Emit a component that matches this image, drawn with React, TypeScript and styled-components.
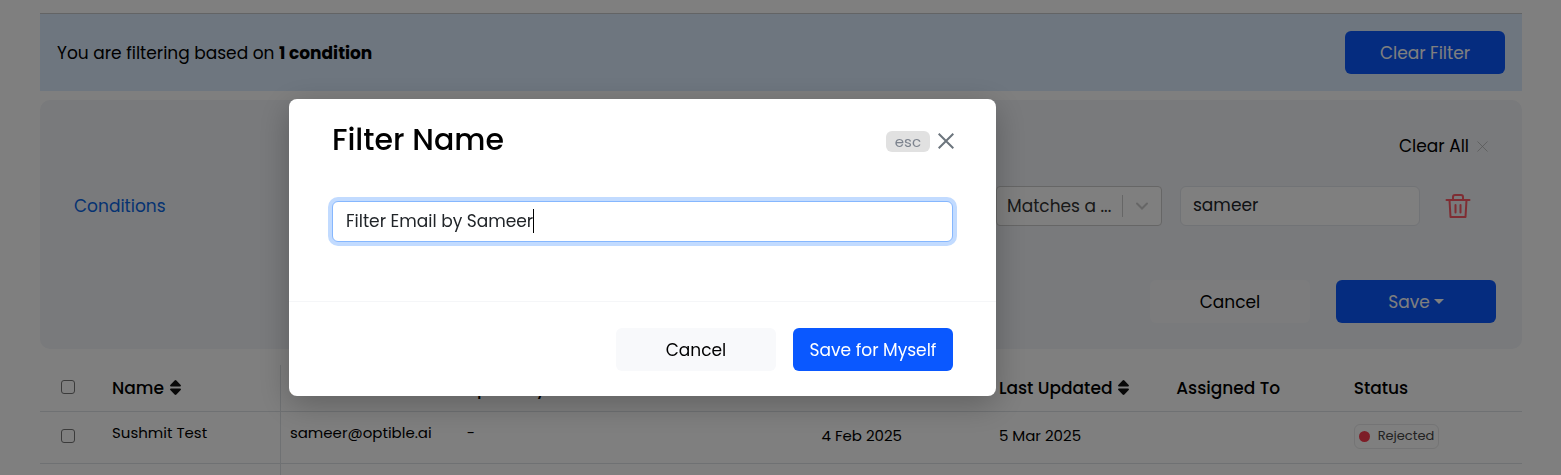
import React, { useLayoutEffect, useRef, useState } from "react";
import styled, { createGlobalStyle, css } from "styled-components";

const GlobalStyle = createGlobalStyle`
  *, *::before, *::after { box-sizing: border-box; }
  html, body { margin: 0; background: #fff; }
  body, button, input, select { font-family: Poppins, Inter, "Open Sans", sans-serif; }
  body { font-size: 17px; line-height: 24px; color: #000; }
`;

/* The page behind an open dialog does not scroll. */
const Page = styled.main`
  height: 100vh;
  overflow: hidden;
  padding: 13px 39px 0 40px;
`;

const Banner = styled.section`
  display: flex;
  align-items: center;
  justify-content: space-between;
  padding: 17px;
  border-top: 1px solid #c6c8ca;
  background: #dcecff;
`;

const Button = styled.button<{ $kind: "primary" | "light" }>`
  display: inline-flex;
  align-items: center;
  justify-content: center;
  gap: 4px;
  width: 160px;
  height: 43px;
  padding: 0;
  border: 0;
  border-radius: 6px;
  font-size: 17px;
  line-height: 24px;
  white-space: nowrap;
  ${({ $kind }) =>
    $kind === "primary"
      ? css`background: #0a58ff; color: #fff;`
      : css`background: #f8f9fb; color: #000;`}
`;

const Arrow = styled.span`
  border: 5px solid transparent;
  border-top-color: currentColor;
  border-bottom: 0;
`;

const Panel = styled.section`
  margin-top: 9px;
  padding: 34px 26px 26px 34px;
  border-radius: 10px;
  background: #f2f4f8;
`;

const PanelTop = styled.div`
  display: flex;
  justify-content: flex-end;
  padding-right: 8px;
`;

const ClearAll = styled.button`
  display: flex;
  align-items: center;
  gap: 8px;
  padding: 0;
  border: 0;
  background: none;
  font-size: 17px;
  line-height: 24px;
`;

const ConditionRow = styled.div`
  display: flex;
  align-items: center;
  margin-top: 28px;
  padding-right: 25px;
`;

const ConditionsLabel = styled.span`
  flex: 1;
  color: #0b66e4;
`;

const SelectBox = styled.label`
  display: flex;
  align-items: center;
  width: 166px;
  height: 40px;
  margin-right: 18px;
  padding-right: 12px;
  border: 1px solid #ccc;
  border-radius: 4px;
  background: #fff;
`;

const Select = styled.select`
  flex: 1;
  min-width: 0;
  height: 36px;
  padding: 0 0 0 10px;
  border: 0;
  appearance: none;
  background: none;
  font-size: 17px;
  color: #333;
`;

const Divider = styled.span`
  width: 1px;
  height: 22px;
  margin-right: 12px;
  background: #ccc;
`;

const ValueInput = styled.input`
  width: 240px;
  height: 40px;
  margin-right: 25px;
  padding: 0 12px 2px;
  border: 1px solid #e3e6ec;
  border-radius: 6px;
  background: #fff;
  font-size: 17px;
  color: #212529;
`;

const IconButton = styled.button`
  display: flex;
  padding: 0;
  border: 0;
  background: none;
`;

const PanelActions = styled.div`
  display: flex;
  justify-content: flex-end;
  gap: 26px;
  margin-top: 54px;
`;

const Table = styled.table`
  width: 100%;
  margin-top: 16px;
  table-layout: fixed;
  border-collapse: collapse;
`;

const Row = styled.tr`
  border-bottom: 1px solid #dee2e6;
`;

const CheckHead = styled.th`
  width: 63px;
  height: 46px;
  padding: 0 0 2px 21px;
  text-align: left;
`;

const Head = styled.th<{ $divided?: boolean }>`
  padding: 0 9px;
  border-right: ${({ $divided }) => ($divided ? "1px solid #dee2e6" : "0")};
  text-align: left;
  font-weight: 500;
  white-space: nowrap;
`;

const SortLabel = styled.span`
  display: inline-flex;
  align-items: center;
  gap: 6px;
`;

const Cell = styled.td<{ $divided?: boolean; $raised?: boolean }>`
  height: 52px;
  padding: ${({ $raised }) => ($raised ? "0 9px 8px" : "0 9px 2px")};
  border-right: ${({ $divided }) => ($divided ? "1px solid #dee2e6" : "0")};
  font-size: 15px;
  line-height: 20px;
  white-space: nowrap;
`;

const CheckCell = styled(Cell)`
  padding: 0 0 2px 21px;
`;

const Checkbox = styled.input`
  display: block;
  width: 14px;
  height: 14px;
  margin: 0;
  appearance: none;
  border: 1px solid #767676;
  border-radius: 3px;
  background: #fff;
`;

const Badge = styled.span`
  display: inline-flex;
  align-items: center;
  gap: 8px;
  height: 25px;
  padding: 0 4px;
  border: 1px solid #e8e8ea;
  border-radius: 6px;
  font-size: 13px;
  color: #444;
  vertical-align: middle;
`;

const Dot = styled.span`
  width: 11px;
  height: 11px;
  border-radius: 50%;
  background: #fb3b4e;
`;

const Backdrop = styled.div`
  position: fixed;
  inset: 0;
  padding: 99px 24px 0 289px;
  background: rgba(0, 0, 0, 0.5);
`;

const Dialog = styled.form`
  max-width: 707px;
  border-radius: 8px;
  background: #fff;
  box-shadow: 0 8px 32px rgba(0, 0, 0, 0.25);
`;

const DialogHeader = styled.header`
  display: flex;
  align-items: center;
  justify-content: space-between;
  padding: 21px 42px 0 43px;
`;

const Title = styled.h2`
  margin: 0;
  font-size: 30px;
  line-height: 40px;
  font-weight: 500;
`;

const CloseButton = styled.button`
  display: flex;
  align-items: center;
  gap: 8px;
  padding: 2px 0 0;
  border: 0;
  background: none;
  color: #6c757d;
`;

const Key = styled.kbd`
  padding: 0 9px;
  border-radius: 6px;
  background: #e1e1e1;
  font-family: inherit;
  font-size: 15px;
  line-height: 21px;
  color: #7c838e;
`;

const DialogBody = styled.div`
  padding: 41px 43px 59px;
`;

const NameField = styled.div`
  position: relative;
`;

const NameInput = styled.input`
  display: block;
  width: 100%;
  height: 41px;
  padding: 0 13px 2px;
  border: 1px solid #86b7fe;
  border-radius: 6px;
  outline: 0;
  box-shadow: 0 0 0 4px #c2dbff;
  font-size: 17px;
  color: #212529;
  caret-color: transparent;
`;

const TextCaret = styled.span`
  position: absolute;
  top: 8px;
  width: 1px;
  height: 24px;
  background: #000;
  pointer-events: none;
`;

const DialogFooter = styled.footer`
  display: flex;
  justify-content: flex-end;
  gap: 17px;
  padding: 26px 43px 25px;
  border-top: 1px solid #f5f6f8;
`;

const Cross = ({ size, color, width }: { size: number; color: string; width: number }) => (
  <svg width={size} height={size} viewBox="0 0 16 16" fill="none" stroke={color} strokeWidth={width} aria-hidden="true">
    <path d="M.7.7l14.6 14.6M15.3.7L.7 15.3" />
  </svg>
);

const SortIcon = () => (
  <svg width="11" height="15" viewBox="0 0 11 15" aria-hidden="true">
    <path d="M4.600.4q.9-.8 1.800 0L10.700 4.900Q11.400 6.500 10 6.600H1Q-.4 6.500.3 4.900zM4.600 14.600q.9.8 1.800 0l4.300-4.500Q11.400 8.500 10 8.400H1Q-.4 8.500.3 10.100z" fill="#111" />
  </svg>
);

const Trash = () => (
  <svg width="26" height="26" viewBox="0 0 26 26" fill="none" stroke="#ff5a66" strokeWidth="2" strokeLinecap="round" strokeLinejoin="round" aria-hidden="true">
    <path d="M1.500 7h23M4.500 7l1 17h15l1-17M8 6.500V4q0-2 2-2h6q2 0 2 2v2.500M10.500 12v7.500M15.500 12v7.500" />
  </svg>
);

const Chevron = () => (
  <svg width="14" height="8" viewBox="0 0 14 8" fill="none" stroke="#ccc" strokeWidth="2" strokeLinecap="round" aria-hidden="true">
    <path d="M2 1.500l5 5 5-5" />
  </svg>
);

/* Text box with a solid, always visible caret that follows the typed text. */
function FilterNameField({ labelId }: { labelId: string }) {
  const ref = useRef<HTMLInputElement>(null);
  const [value, setValue] = useState("Filter Email by Sameer");
  const [caretLeft, setCaretLeft] = useState(0);

  useLayoutEffect(() => {
    const el = ref.current;
    const ctx = document.createElement("canvas").getContext("2d");
    if (!el || !ctx) return;
    el.focus();
    const style = getComputedStyle(el);
    ctx.font = `${style.fontSize} ${style.fontFamily}`;
    setCaretLeft(Math.round(ctx.measureText(value).width) + 14);
  }, [value]);

  return (
    <NameField>
      <NameInput ref={ref} aria-labelledby={labelId} value={value} onChange={(e) => setValue(e.target.value)} />
      <TextCaret style={{ left: caretLeft }} />
    </NameField>
  );
}

export default function App() {
  return (
    <>
      <GlobalStyle />
      <Page>
        <Banner>
          <span>You are filtering based on <b>1 condition</b></span>
          <Button type="button" $kind="primary">Clear Filter</Button>
        </Banner>
        <Panel>
          <PanelTop>
            <ClearAll type="button">Clear All <Cross size={11} color="#aaa" width={1} /></ClearAll>
          </PanelTop>
          <ConditionRow>
            <ConditionsLabel>Conditions</ConditionsLabel>
            <SelectBox>
              <Select aria-label="Match type"><option>Matches a ...</option></Select>
              <Divider />
              <Chevron />
            </SelectBox>
            <ValueInput aria-label="Value" defaultValue="sameer" />
            <IconButton type="button" aria-label="Delete condition"><Trash /></IconButton>
          </ConditionRow>
          <PanelActions>
            <Button type="button" $kind="light">Cancel</Button>
            <Button type="button" $kind="primary">Save<Arrow /></Button>
          </PanelActions>
        </Panel>
        <Table>
          <thead>
            <Row>
              <CheckHead><Checkbox type="checkbox" aria-label="Select all" /></CheckHead>
              <Head $divided><SortLabel>Name <SortIcon /></SortLabel></Head>
              <Head>Email</Head>
              <Head>Specialty</Head>
              <Head />
              <Head>Created</Head>
              <Head><SortLabel>Last Updated <SortIcon /></SortLabel></Head>
              <Head>Assigned To</Head>
              <Head>Status</Head>
            </Row>
          </thead>
          <tbody>
            <Row>
              <CheckCell><Checkbox type="checkbox" aria-label="Select Sushmit Test" /></CheckCell>
              <Cell $divided $raised>Sushmit Test</Cell>
              <Cell $raised>sameer@optible.ai</Cell>
              <Cell $raised>-</Cell>
              <Cell />
              <Cell>4 Feb 2025</Cell>
              <Cell>5 Mar 2025</Cell>
              <Cell />
              <Cell><Badge><Dot />Rejected</Badge></Cell>
            </Row>
            <Row>
              <CheckCell />
              <Cell $divided />
              <Cell colSpan={7} />
            </Row>
          </tbody>
        </Table>
      </Page>
      <Backdrop>
        <Dialog role="dialog" aria-modal="true" aria-labelledby="filter-title">
          <DialogHeader>
            <Title id="filter-title">Filter Name</Title>
            <CloseButton type="button" aria-label="Close">
              <Key>esc</Key>
              <Cross size={16} color="#6c757d" width={2} />
            </CloseButton>
          </DialogHeader>
          <DialogBody>
            <FilterNameField labelId="filter-title" />
          </DialogBody>
          <DialogFooter>
            <Button type="button" $kind="light">Cancel</Button>
            <Button type="button" $kind="primary">Save for Myself</Button>
          </DialogFooter>
        </Dialog>
      </Backdrop>
    </>
  );
}
